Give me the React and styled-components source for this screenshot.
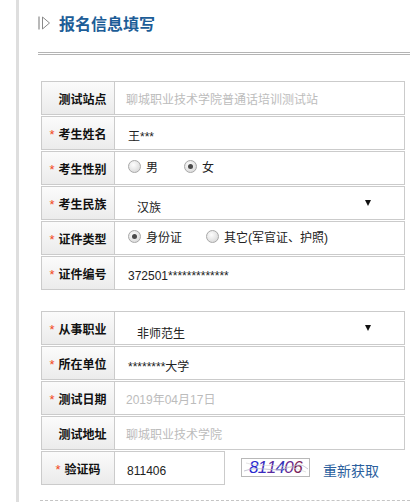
import React from "react";
import styled, { createGlobalStyle } from "styled-components";

const GlobalStyle = createGlobalStyle`
  html, body { margin: 0; padding: 0; background: #fff; }
  body {
    font-family: "Liberation Sans", "Noto Sans CJK SC", sans-serif;
    font-size: 12px;
    color: #222;
  }
`;

const Frame = styled.div`
  margin-left: 16px;
  border-left: 3px solid #dedede;
  min-height: 502px;
  box-sizing: border-box;
  overflow: hidden;
`;

const Header = styled.div`
  display: flex;
  align-items: center;
  gap: 8px;
  height: 24px;
  padding: 11px 0 0 19px;
`;

const Title = styled.h2`
  margin: 0;
  font-family: "Noto Sans CJK SC", sans-serif;
  font-size: 16px;
  font-weight: 700;
  line-height: 24px;
  color: #1d5d97;
`;

const DoubleRule = styled.div`
  margin: 17px 0 0 19px;
  height: 1px;
  border-top: 1px solid #b4b4b4;
  border-bottom: 1px solid #b4b4b4;
`;

const Table = styled.div`
  display: flex;
  flex-direction: column;
  gap: 1px;
  width: 364px;
  margin: ${(p) => p.$top}px 0 0 22px;
`;

const Row = styled.div`
  display: flex;
  height: 34px;
`;

const Label = styled.div`
  width: 74px;
  box-sizing: border-box;
  border: 1px solid #cbcbcb;
  background: linear-gradient(#fbfbfb, #ebebeb);
  display: flex;
  align-items: center;
  justify-content: center;
  font-family: "Noto Sans CJK SC", sans-serif;
  font-weight: 700;
  font-size: 12px;
  color: #111;
  white-space: nowrap;
`;

const Star = styled.span`
  font-family: "Liberation Sans", sans-serif;
  font-size: 13px;
  color: #f2451c;
  font-weight: 400;
  margin-right: 4px;
  position: relative;
  top: 1px;
  visibility: ${(p) => (p.$hidden ? "hidden" : "visible")};
`;

const Value = styled.div`
  flex: ${(p) => (p.$width ? "none" : "1")};
  width: ${(p) => (p.$width ? `${p.$width}px` : "auto")};
  box-sizing: border-box;
  border: 1px solid #cbcbcb;
  border-left: none;
  display: flex;
  align-items: center;
  padding-left: ${(p) => p.$pad ?? 13}px;
  padding-top: ${(p) => p.$shift ?? 0}px;
  color: ${(p) => (p.$muted ? "#bcbcbc" : "#222")};
  font-size: 12px;
  white-space: nowrap;
`;

const SelectBox = styled.div`
  flex: 1;
  display: flex;
  align-items: center;
  justify-content: space-between;
  padding-right: 33px;
`;

const SelectText = styled.span`
  position: relative;
  top: ${(p) => p.$drop ?? 2}px;
`;

const Arrow = styled.span`
  width: 0;
  height: 0;
  border-left: 3.5px solid transparent;
  border-right: 3.5px solid transparent;
  border-top: 6px solid #111;
`;

const RadioGroup = styled.div`
  display: flex;
  align-items: center;
  padding-bottom: 3px;
  gap: ${(p) => p.$gap}px;
`;

const RadioItem = styled.label`
  display: flex;
  align-items: center;
  gap: 5px;
  color: #222;
`;

const RadioDot = styled.span`
  width: 11px;
  height: 11px;
  border-radius: 50%;
  border: 1px solid #a8a8a8;
  background: radial-gradient(circle at 40% 35%, #fdfdfd, #d2d2d2);
  display: inline-flex;
  align-items: center;
  justify-content: center;
  &::after {
    content: "";
    width: 5px;
    height: 5px;
    border-radius: 50%;
    background: ${(p) => (p.$checked ? "#4a4a4a" : "transparent")};
  }
`;

const CaptchaRow = styled.div`
  display: flex;
  align-items: center;
  flex: 1;
  padding-left: 16px;
  gap: 13px;
`;

const Captcha = styled.div`
  position: relative;
  width: 67px;
  height: 17px;
  border: 1px solid #b8b8b8;
  margin-top: -1px;
  display: flex;
  align-items: center;
  justify-content: center;
  font-family: "Liberation Sans", sans-serif;
  font-style: italic;
  font-size: 17px;
  letter-spacing: -0.6px;
  overflow: hidden;
`;

const CaptchaChar = styled.span`
  color: ${(p) => p.$c};
`;

const Noise = styled.svg`
  position: absolute;
  inset: 0;
  pointer-events: none;
`;

const Refresh = styled.a`
  font-family: "Noto Sans CJK SC", sans-serif;
  font-size: 14px;
  color: #2b5f9e;
  text-decoration: none;
  margin-top: 4px;
`;

const DashRule = styled.div`
  margin: 15px 0 0 21px;
  border-top: 1px dashed #c4c4c4;
`;

const TitleIcon = () => (
  <svg width="13" height="14" viewBox="0 0 13 14">
    <line x1="1" y1="0.5" x2="1" y2="13.5" stroke="#8a8a8a" strokeWidth="1.2" />
    <path d="M4.5 1 L11.5 7 L4.5 13 Z" fill="none" stroke="#8a8a8a" strokeWidth="1" />
  </svg>
);

const Radio = ({ checked, children }) => (
  <RadioItem>
    <RadioDot $checked={checked} />
    {children}
  </RadioItem>
);

const LabelCell = ({ req, children }) => (
  <Label>
    <Star $hidden={!req}>*</Star>
    {children}
  </Label>
);

export default function App() {
  const code = [
    ["8", "#2a2ad0"],
    ["1", "#3a2ac0"],
    ["1", "#5a2aa0"],
    ["4", "#3030b8"],
    ["0", "#6a2a90"],
    ["6", "#7a1f5a"],
  ];
  return (
    <>
      <GlobalStyle />
      <Frame>
        <Header>
          <TitleIcon />
          <Title>报名信息填写</Title>
        </Header>
        <DoubleRule />

        <Table $top={26}>
          <Row>
            <LabelCell>测试站点</LabelCell>
            <Value $muted $pad={11}>聊城职业技术学院普通话培训测试站</Value>
          </Row>
          <Row>
            <LabelCell req>考生姓名</LabelCell>
            <Value $shift={5}>王***</Value>
          </Row>
          <Row>
            <LabelCell req>考生性别</LabelCell>
            <Value>
              <RadioGroup $gap={26}>
                <Radio>男</Radio>
                <Radio checked>女</Radio>
              </RadioGroup>
            </Value>
          </Row>
          <Row>
            <LabelCell req>考生民族</LabelCell>
            <Value $pad={22}>
              <SelectBox>
                <SelectText $drop={3}>汉族</SelectText>
                <Arrow />
              </SelectBox>
            </Value>
          </Row>
          <Row>
            <LabelCell req>证件类型</LabelCell>
            <Value>
              <RadioGroup $gap={24}>
                <Radio checked>身份证</Radio>
                <Radio>其它(军官证、护照)</Radio>
              </RadioGroup>
            </Value>
          </Row>
          <Row>
            <LabelCell req>证件编号</LabelCell>
            <Value $shift={5}>372501*************</Value>
          </Row>
        </Table>

        <Table $top={21}>
          <Row>
            <LabelCell req>从事职业</LabelCell>
            <Value $pad={22}>
              <SelectBox>
                <SelectText $drop={4}>非师范生</SelectText>
                <Arrow />
              </SelectBox>
            </Value>
          </Row>
          <Row>
            <LabelCell req>所在单位</LabelCell>
            <Value $shift={5}>********大学</Value>
          </Row>
          <Row>
            <LabelCell req>测试日期</LabelCell>
            <Value $muted $pad={11}>2019年04月17日</Value>
          </Row>
          <Row>
            <LabelCell>测试地址</LabelCell>
            <Value $muted $pad={11}>聊城职业技术学院</Value>
          </Row>
          <Row>
            <LabelCell req>验证码</LabelCell>
            <Value $width={110} $pad={12} $shift={5}>811406</Value>
            <CaptchaRow>
              <Captcha>
                {code.map(([ch, c], i) => (
                  <CaptchaChar key={i} $c={c}>{ch}</CaptchaChar>
                ))}
                <Noise viewBox="0 0 67 17" width="67" height="17">
                  <path d="M2 12 C 18 6, 30 14, 45 9 S 60 6, 66 10" fill="none" stroke="#b8b8c8" strokeWidth="0.8" />
                  <path d="M4 4 C 20 9, 40 3, 64 13" fill="none" stroke="#d0d0d0" strokeWidth="0.6" />
                </Noise>
              </Captcha>
              <Refresh href="#">重新获取</Refresh>
            </CaptchaRow>
          </Row>
        </Table>
        <DashRule />
      </Frame>
    </>
  );
}
